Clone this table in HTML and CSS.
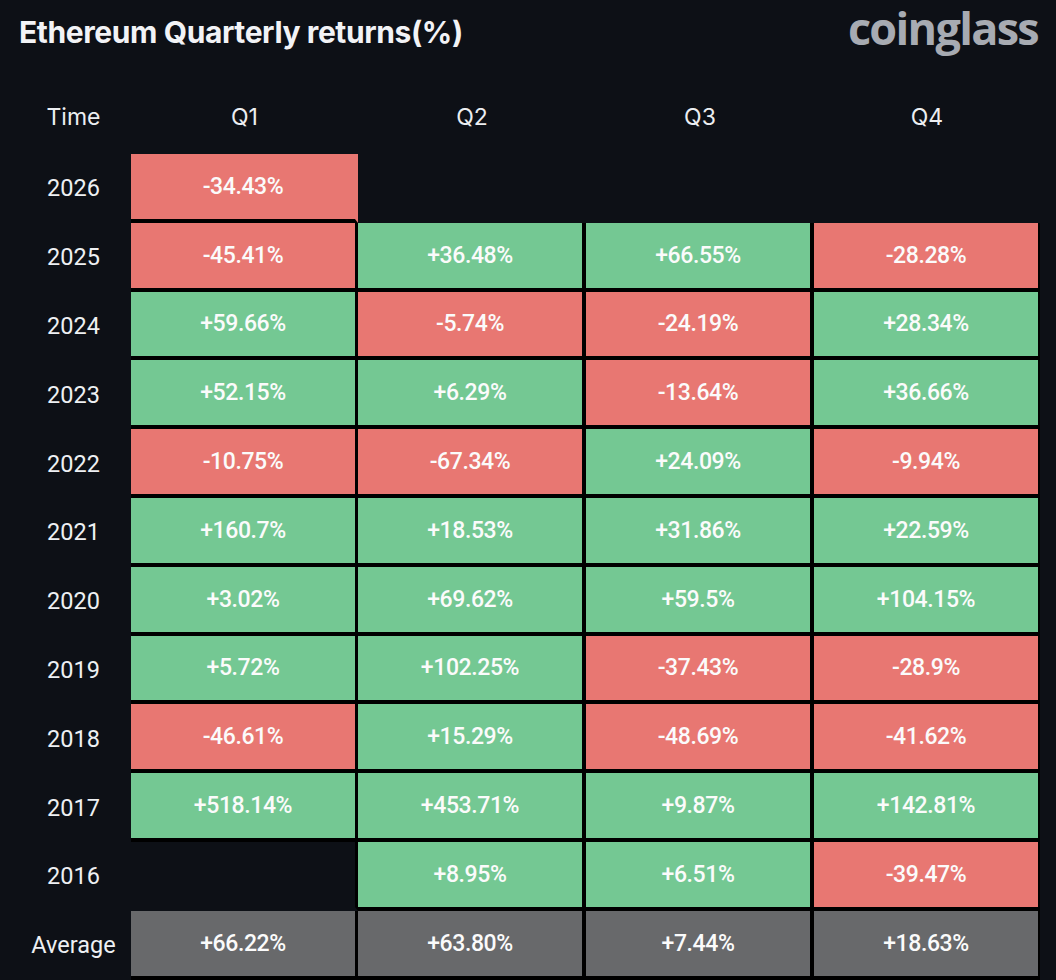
FILE: index.html
```html
<!DOCTYPE html>
<html lang="en">
<head>
<meta charset="utf-8">
<title>Ethereum Quarterly returns(%)</title>
<link rel="stylesheet" href="styles.css">
</head>
<body>
<div class="page">
  <header class="top">
    <h1 class="title">Ethereum Quarterly returns(%)</h1>
    <div class="logo">coinglass</div>
  </header>
  <div class="table">
    <div class="row head">
      <div class="label">Time</div><div class="hcell">Q1</div><div class="hcell">Q2</div><div class="hcell">Q3</div><div class="hcell">Q4</div>
    </div>
    <div class="row">
      <div class="label">2026</div><div class="cell neg open">-34.43%</div><div class="cell none"></div><div class="cell none"></div><div class="cell none"></div>
    </div>
    <div class="row">
      <div class="label">2025</div><div class="cell neg">-45.41%</div><div class="cell pos">+36.48%</div><div class="cell pos">+66.55%</div><div class="cell neg">-28.28%</div>
    </div>
    <div class="row">
      <div class="label">2024</div><div class="cell pos">+59.66%</div><div class="cell neg">-5.74%</div><div class="cell neg">-24.19%</div><div class="cell pos">+28.34%</div>
    </div>
    <div class="row">
      <div class="label">2023</div><div class="cell pos">+52.15%</div><div class="cell pos">+6.29%</div><div class="cell neg">-13.64%</div><div class="cell pos">+36.66%</div>
    </div>
    <div class="row">
      <div class="label">2022</div><div class="cell neg">-10.75%</div><div class="cell neg">-67.34%</div><div class="cell pos">+24.09%</div><div class="cell neg">-9.94%</div>
    </div>
    <div class="row">
      <div class="label">2021</div><div class="cell pos">+160.7%</div><div class="cell pos">+18.53%</div><div class="cell pos">+31.86%</div><div class="cell pos">+22.59%</div>
    </div>
    <div class="row">
      <div class="label">2020</div><div class="cell pos">+3.02%</div><div class="cell pos">+69.62%</div><div class="cell pos">+59.5%</div><div class="cell pos">+104.15%</div>
    </div>
    <div class="row">
      <div class="label">2019</div><div class="cell pos">+5.72%</div><div class="cell pos">+102.25%</div><div class="cell neg">-37.43%</div><div class="cell neg">-28.9%</div>
    </div>
    <div class="row">
      <div class="label">2018</div><div class="cell neg">-46.61%</div><div class="cell pos">+15.29%</div><div class="cell neg">-48.69%</div><div class="cell neg">-41.62%</div>
    </div>
    <div class="row">
      <div class="label">2017</div><div class="cell pos">+518.14%</div><div class="cell pos">+453.71%</div><div class="cell pos">+9.87%</div><div class="cell pos">+142.81%</div>
    </div>
    <div class="row">
      <div class="label">2016</div><div class="cell blank"></div><div class="cell pos">+8.95%</div><div class="cell pos">+6.51%</div><div class="cell neg">-39.47%</div>
    </div>
    <div class="row">
      <div class="label">Average</div><div class="cell avg">+66.22%</div><div class="cell avg">+63.80%</div><div class="cell avg">+7.44%</div><div class="cell avg">+18.63%</div>
    </div>
    <div class="row stub">
      <div class="label"></div><div class="cell avg"></div><div class="cell avg"></div><div class="cell avg"></div><div class="cell avg"></div>
    </div>
  </div>
</div>
</body>
</html>
```
FILE: styles.css
```css
html, body {
  margin: 0;
  padding: 0;
  background: #0d1016;
  height: 980px;
  overflow: hidden;
}

.page {
  width: 1056px;
  height: 980px;
  overflow: hidden;
  color: #f4f5f7;
}

.top {
  height: 66px;
  display: flex;
  justify-content: space-between;
  align-items: flex-start;
}

.title {
  margin: 13px 0 0 19px;
  font-family: Inter, "Noto Sans", sans-serif;
  font-weight: 700;
  font-size: 30px;
  line-height: 38px;
  letter-spacing: -0.4px;
  color: #f2f3f6;
}

.logo {
  margin: 3px 18px 0 0;
  font-family: "Open Sans", sans-serif;
  font-weight: 700;
  font-size: 45px;
  line-height: 50px;
  letter-spacing: -1.7px;
  color: #a7abb2;
}

.table {
  display: flex;
  flex-direction: column;
}

.row {
  display: grid;
  grid-template-columns: 131px 227px 228px 228px 226px;
  height: 68.8px;
  flex: none;
}

.row.head {
  height: 88px;
  padding-top: 14px;
  box-sizing: border-box;
  align-items: center;
}

.row.stub {
  height: 20px;
}

.label {
  padding-left: 16px;
  display: flex;
  align-items: center;
  justify-content: center;
  font-family: Roboto, "Noto Sans", sans-serif;
  font-size: 23.5px;
  font-weight: 400;
  color: #eef0f3;
}

.head .label,
.hcell {
  font-family: Inter, "Noto Sans", sans-serif;
  font-size: 23px;
  font-weight: 400;
  color: #eceef1;
  text-align: center;
}

.cell {
  display: flex;
  align-items: center;
  justify-content: center;
  border-bottom: 4px solid #000;
  border-right: 3px solid #000;
  font-family: Roboto, "Noto Sans", sans-serif;
  font-size: 23px;
  font-weight: 500;
  letter-spacing: -0.4px;
  color: #fbfbfb;
}

.row > .cell:nth-child(3),
.row > .cell:nth-child(4) {
  border-right-width: 4px;
}

.row > .cell:nth-child(5) {
  border-right-width: 2px;
}

.pos { background: #74c893; }
.neg { background: #e87772; }
.avg { background: #68696b; }

.cell.open {
  border-right-color: #e87772;
}

.cell.none {
  border-color: transparent;
}

.cell.blank {
  border-bottom-color: transparent;
  background: transparent;
}
```
